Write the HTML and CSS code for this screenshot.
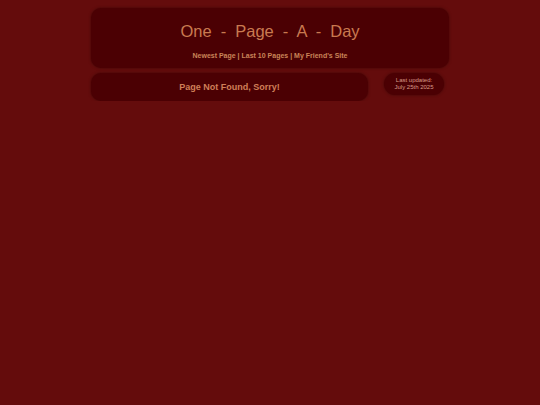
FILE: index.html
```html
<!DOCTYPE html>
<html>
<head>
<meta charset="utf-8">
<title>One - Page - A - Day</title>
<link rel="stylesheet" href="styles.css">
</head>
<body>
<div class="wrap">
  <header class="header">
    <h1 class="title">One - Page - A - Day</h1>
    <nav class="nav"><a href="#">Newest Page</a> | <a href="#">Last 10 Pages</a> | <a href="#">My Friend's Site</a></nav>
  </header>
  <div class="row">
    <main class="main">Page Not Found, Sorry!</main>
    <aside class="side">Last updated:<br>July 25th 2025</aside>
  </div>
</div>
</body>
</html>
```
FILE: styles.css
```css
html, body {
  margin: 0;
  padding: 0;
  background: #640c0c;
}
body {
  padding-top: 8px;
  font-family: "Liberation Sans", Arial, sans-serif;
  color: #cf8458;
}
.wrap {
  width: 358px;
  margin: 0 auto;
}
.header {
  box-sizing: border-box;
  height: 60px;
  padding-top: 14px;
  background: #4b0003;
  border-radius: 10px;
  box-shadow: 0 0 3px rgba(40, 0, 0, 0.6);
  text-align: center;
}
.title {
  margin: 0;
  font-size: 16.5px;
  line-height: 18px;
  font-weight: normal;
  word-spacing: 4.5px;
  color: #c97a50;
}
.nav {
  margin-top: 12px;
  font-size: 7px;
  line-height: 8px;
  font-weight: bold;
  color: #c98458;
}
.nav a {
  color: inherit;
  text-decoration: none;
}
.row {
  display: flex;
  align-items: flex-start;
  gap: 16px;
  margin-top: 5px;
}
.main {
  box-sizing: border-box;
  width: 277px;
  height: 28px;
  display: flex;
  align-items: center;
  justify-content: center;
  background: #4b0003;
  border-radius: 10px;
  box-shadow: 0 0 3px rgba(40, 0, 0, 0.6);
  font-size: 9px;
  font-weight: bold;
  color: #cf7f58;
}
.side {
  box-sizing: border-box;
  width: 60px;
  height: 22px;
  display: flex;
  flex-direction: column;
  align-items: center;
  justify-content: center;
  background: #4b0003;
  border-radius: 11px;
  box-shadow: 0 0 3px rgba(40, 0, 0, 0.6);
  font-size: 6px;
  line-height: 7px;
  text-align: center;
  color: #d89a88;
}
```
